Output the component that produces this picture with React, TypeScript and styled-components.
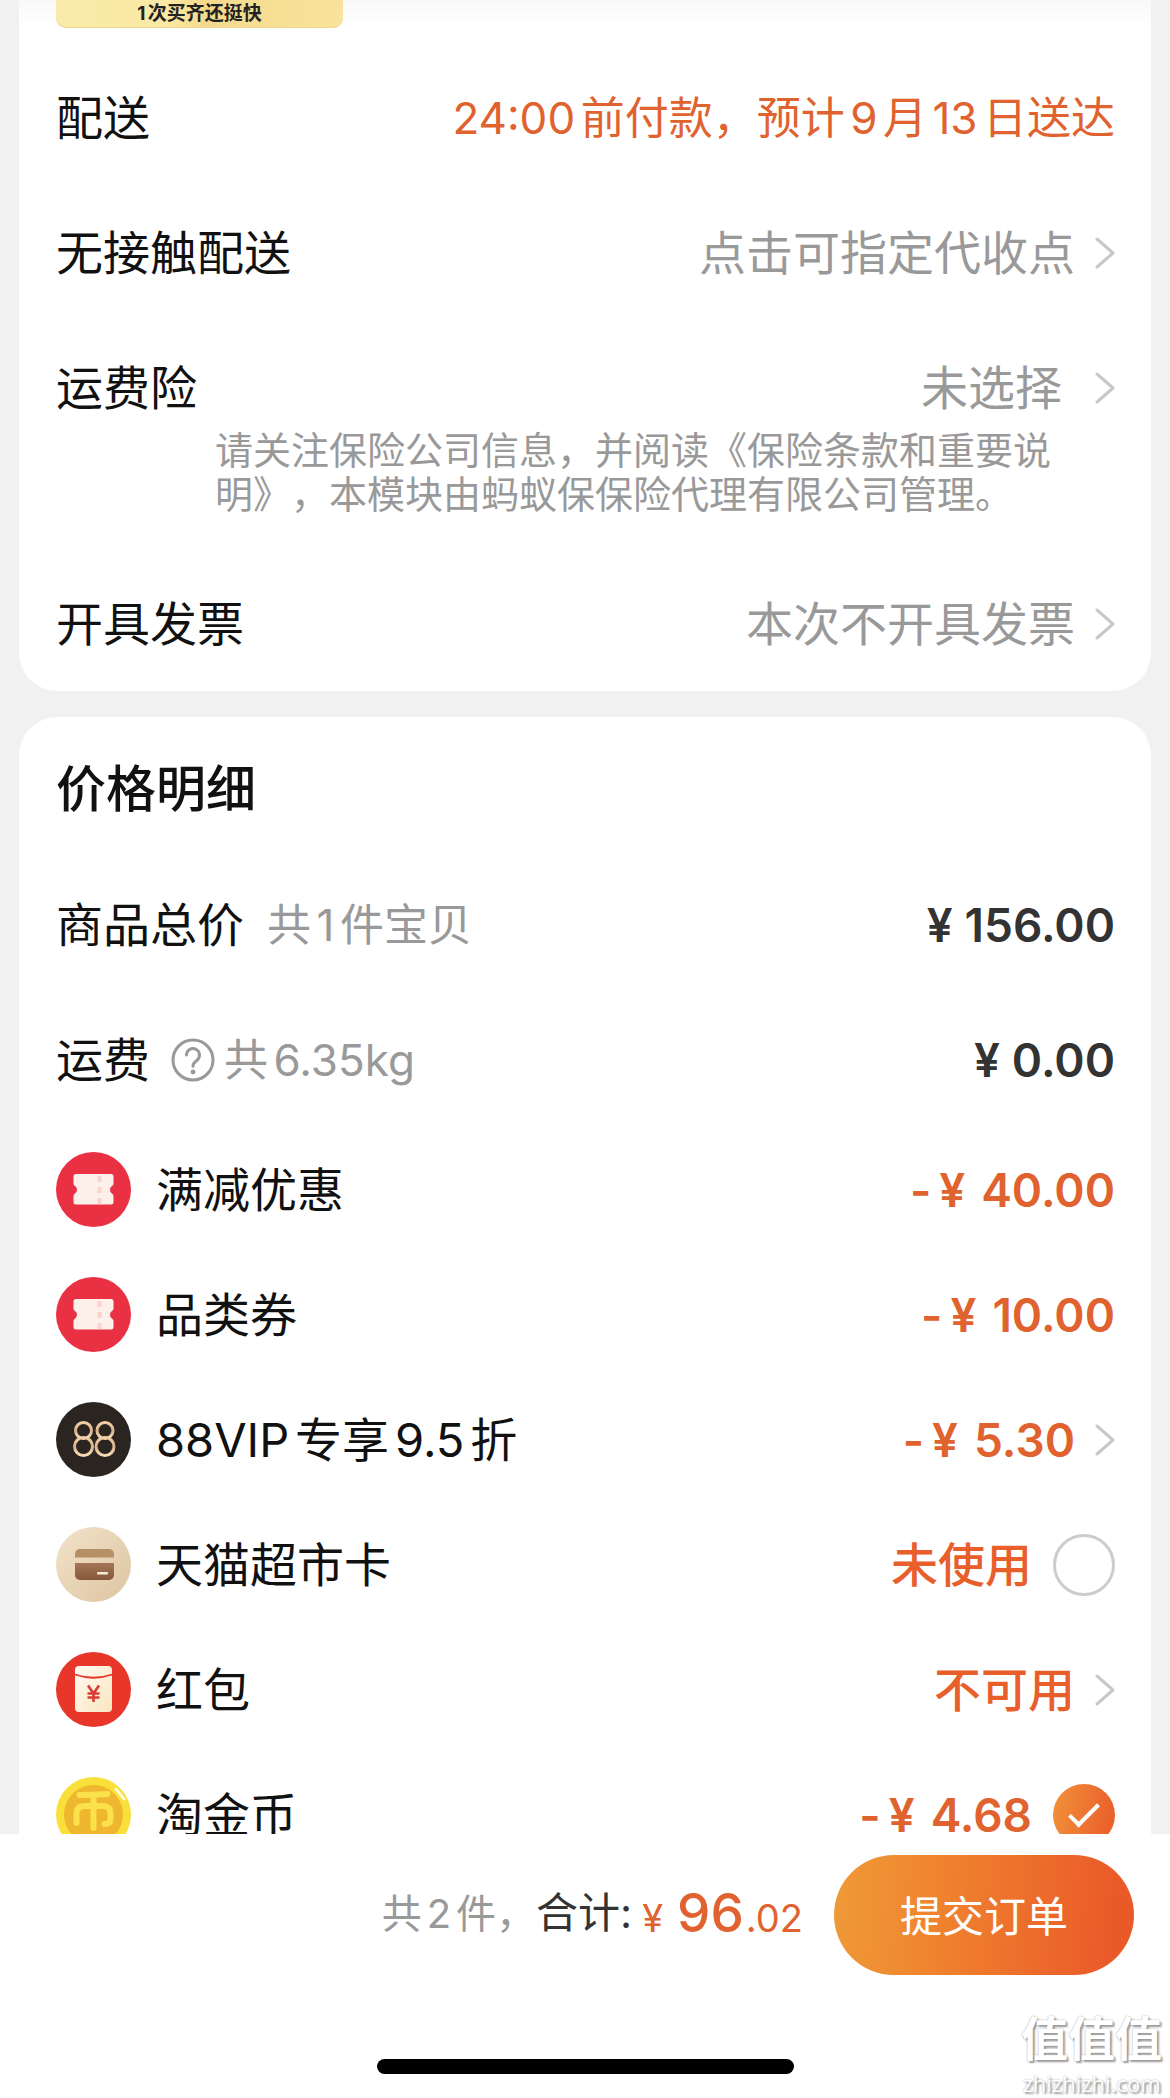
import React, { useState } from 'react';
import styled, { createGlobalStyle } from 'styled-components';

const GlobalStyle = createGlobalStyle`
  *, *::before, *::after { box-sizing: border-box; }
  body {
    margin: 0;
    background: #f1f1f1;
    color: #111;
    font-family: Inter, "Noto Sans CJK SC", sans-serif;
    text-autospace: normal;
    text-spacing-trim: space-all;
  }
  button, input { font: inherit; color: inherit; }
`;

const ORANGE = '#e0622f';
const GRAY = '#999';

const Page = styled.div`
  height: 100vh;
  display: flex;
  flex-direction: column;
  overflow: hidden;
`;

const Scroll = styled.main`
  flex: 1;
  min-height: 0;
  overflow: hidden;
  display: flex;
  flex-direction: column;
  gap: 26px;
  padding: 0 19px;
`;

const Card = styled.section<{ $first?: boolean }>`
  flex: none;
  padding: 0 36px 0 37px;
  background: ${p => (p.$first ? 'linear-gradient(#f8f8f8, #fff 24px)' : '#fff')};
  border-radius: ${p => (p.$first ? '0 0 38px 38px' : '38px')};
`;

const Banner = styled.div`
  width: 287px;
  height: 28px;
  padding-top: 2px;
  border-radius: 0 0 10px 10px;
  background: linear-gradient(90deg, #faebab, #fae9a4 38%, #f5da8c 52%, #f9e39c);
  box-shadow: inset 0 -1px 0 #efd98a;
  font-size: 19px;
  font-weight: 700;
  line-height: 24px;
  text-align: center;
  color: #222;
`;

const Rows = styled.div`
  padding-top: 22px;
`;

const Row = styled.div<{ $h: number }>`
  min-height: ${p => p.$h}px;
  display: flex;
  align-items: center;
  justify-content: space-between;
`;

const Label = styled.span`
  font-size: 47px;
  line-height: 60px;
`;

const Group = styled.span<{ $gap: number }>`
  display: flex;
  align-items: center;
  gap: ${p => p.$gap}px;
`;

const Muted = styled.span`
  font-size: 44px;
  line-height: 60px;
  color: ${GRAY};
`;

const DeliveryTime = styled(Muted)`
  color: ${ORANGE};
`;

const LinkButton = styled.button<{ $gap?: number }>`
  display: flex;
  align-items: center;
  gap: ${p => p.$gap ?? 20}px;
  padding: 0;
  border: 0;
  background: none;
  font-size: 47px;
  line-height: 60px;
  color: ${GRAY};
`;

const Note = styled.p`
  margin: -27px 0 40px 159px;
  max-width: 860px;
  font-size: 38px;
  line-height: 44px;
  color: ${GRAY};
`;

const Title = styled.h2`
  margin: 0;
  padding: 40px 0 36px;
  font-size: 50px;
  line-height: 64px;
  font-weight: 500;
`;

const Amount = styled.span<{ $dark?: boolean }>`
  display: flex;
  font-size: 46px;
  line-height: 60px;
  font-weight: 600;
  color: ${p => (p.$dark ? '#333' : ORANGE)};
`;

const Yen = styled.span<{ $wide?: boolean }>`
  margin: ${p => (p.$wide ? '0 16px 0 8px' : '0 12px 0 0')};
`;

const State = styled.span`
  font-size: 47px;
  line-height: 60px;
  font-weight: 500;
  color: #e85f2c;
`;

const IconButton = styled.button`
  display: flex;
  padding: 0;
  border: 0;
  background: none;
`;

const Check = styled.input`
  appearance: none;
  flex: none;
  width: 62px;
  height: 62px;
  margin: 0;
  border: 3px solid #ccc;
  border-radius: 50%;
  display: grid;
  place-items: center;
  &:checked {
    border: 0;
    background: linear-gradient(100deg, #f0923a, #ea5a29);
  }
  &:checked::before {
    content: '';
    width: 30px;
    height: 15px;
    margin: 0 0 6px 0;
    border: solid #fff;
    border-width: 0 0 4px 4px;
    transform: rotate(-45deg);
  }
`;

const Footer = styled.footer`
  flex: none;
  height: 264px;
  background: #fff;
  display: flex;
  flex-direction: column;
  position: relative;
`;

const Bar = styled.div`
  display: flex;
  align-items: center;
  justify-content: flex-end;
  gap: 31px;
  padding: 21px 36px 0 0;
`;

const Total = styled.div`
  display: flex;
  align-items: center;
  font-size: 38px;
  line-height: 60px;
`;

const Summary = styled.div`
  padding-bottom: 4px;
`;

const Count = styled.span`
  font-size: 40px;
  color: ${GRAY};
`;

const TotalLabel = styled.span`
  margin-right: 10px;
  font-size: 42px;
  color: #333;
`;

const Price = styled.div`
  color: ${ORANGE};
`;

const Big = styled.span`
  margin: 0 2px 0 14px;
  font-size: 53px;
  font-weight: 500;
`;

const Submit = styled.button`
  width: 300px;
  height: 120px;
  padding: 0 0 4px;
  border: 0;
  border-radius: 60px;
  background: linear-gradient(95deg, #ef9a38, #f0852f 32%, #ea5a29 92%);
  color: #fff;
  font-size: 42px;
`;

const HomeIndicator = styled.div`
  width: 417px;
  height: 15px;
  margin: 84px auto 0;
  border-radius: 8px;
  background: #000;
`;

const Watermark = styled.div`
  position: absolute;
  right: 8px;
  bottom: 0;
  display: flex;
  flex-direction: column;
  align-items: center;
  color: #fff;
  text-shadow: 2px 2px 2px #999, 0 0 2px #aaa;
`;

const WmBig = styled.span`
  font-family: "Liberation Sans", "Noto Sans CJK SC", sans-serif;
  font-size: 47px;
  line-height: 56px;
  font-weight: 700;
`;

const WmSmall = styled.span`
  font-family: "Open Sans", sans-serif;
  font-size: 22px;
  line-height: 30px;
`;

const Chevron = () => (
  <svg width="20" height="34" viewBox="0 0 20 34" fill="none" stroke="#c8c8c8" strokeWidth="3" strokeLinecap="round" strokeLinejoin="round" aria-hidden="true">
    <path d="M2 3l16 14L2 31" />
  </svg>
);

const HelpIcon = () => (
  <svg width="44" height="44" viewBox="0 0 44 44" fill="none" stroke="#999" strokeWidth="3" strokeLinecap="round" aria-hidden="true">
    <circle cx="22" cy="22" r="20" />
    <path d="M15.500 17a6.500 6.500 0 1 1 10.500 5.200c-2.600 1.900-4 3.200-4 6" />
    <circle cx="22" cy="34" r="2.400" fill="#999" stroke="none" />
  </svg>
);

const TicketIcon = () => (
  <svg width="75" height="75" viewBox="0 0 75 75" aria-hidden="true">
    <circle cx="37.500" cy="37.500" r="37.500" fill="#ea3043" />
    <path d="M20 22h35a2.500 2.500 0 0 1 2.500 2.500v7q0 1.500-1.500 2.500a4.500 4.500 0 0 0 0 7.500q1.500 1 1.500 2.500v6a2.500 2.500 0 0 1-2.500 2.500H20a2.500 2.500 0 0 1-2.500-2.500v-6q0-1.500 1.500-2.500a4.500 4.500 0 0 0 0-7.500q-1.500-1-1.500-2.500v-7A2.500 2.500 0 0 1 20 22z" fill="#fdf0ea" />
    <path d="M43.500 24v28" stroke="#f8d3cc" strokeWidth="4" strokeDasharray="6 5" />
  </svg>
);

const VipIcon = () => (
  <svg width="75" height="75" viewBox="0 0 75 75" aria-hidden="true">
    <defs>
      <linearGradient id="gold" x1="0" y1="0" x2="0" y2="1">
        <stop offset="0" stopColor="#f3cfa4" />
        <stop offset="0.5" stopColor="#d9b28a" />
        <stop offset="1" stopColor="#f8dcb8" />
      </linearGradient>
    </defs>
    <circle cx="37.500" cy="37.500" r="37.500" fill="#2b2522" />
    <g fill="none" stroke="url(#gold)" strokeWidth="3">
      <circle cx="27.500" cy="28.500" r="8" />
      <circle cx="27.500" cy="44.500" r="9" />
      <circle cx="49" cy="28.500" r="8" />
      <circle cx="49" cy="44.500" r="9" />
    </g>
  </svg>
);

const CardIcon = () => (
  <svg width="75" height="75" viewBox="0 0 75 75" aria-hidden="true">
    <defs>
      <linearGradient id="sand" x1="0" y1="0" x2="1" y2="1">
        <stop offset="0" stopColor="#f3e3cb" />
        <stop offset="1" stopColor="#dcc4a0" />
      </linearGradient>
      <linearGradient id="brown" x1="0" y1="0" x2="0" y2="1">
        <stop offset="0" stopColor="#a37755" />
        <stop offset="1" stopColor="#85583d" />
      </linearGradient>
    </defs>
    <circle cx="37.500" cy="37.500" r="37.500" fill="url(#sand)" />
    <path d="M24 22h29a5 5 0 0 1 5 5v3.500H19V27a5 5 0 0 1 5-5z" fill="#b59066" />
    <path d="M19 36h39v12a5 5 0 0 1-5 5H24a5 5 0 0 1-5-5z" fill="url(#brown)" />
    <rect x="41" y="45" width="11" height="2.600" rx="1" fill="#f6ead8" />
  </svg>
);

const PacketIcon = () => (
  <svg width="75" height="75" viewBox="0 0 75 75" aria-hidden="true">
    <defs>
      <linearGradient id="cream" x1="0" y1="0" x2="1" y2="1">
        <stop offset="0" stopColor="#fffaf0" />
        <stop offset="1" stopColor="#fae6c0" />
      </linearGradient>
    </defs>
    <circle cx="37.500" cy="37.500" r="37.500" fill="#e9362a" />
    <rect x="19" y="14" width="37" height="46" rx="4" fill="url(#cream)" />
    <path d="M19 22.500q18.500 6.500 37 0" fill="none" stroke="#e9362a" strokeWidth="1.800" />
    <path d="M32 33.500l5.500 8 5.500-8M37.500 41.500V50M31.500 41.500h12M31.500 45.500h12" fill="none" stroke="#dc3b35" strokeWidth="2.600" />
  </svg>
);

const CoinIcon = () => (
  <svg width="75" height="75" viewBox="0 0 75 75" aria-hidden="true">
    <circle cx="37.500" cy="37.500" r="37.500" fill="#f8df3a" />
    <circle cx="37.500" cy="37.500" r="29.500" fill="#efb62f" />
    <g fill="none" stroke="#fbe14a" strokeWidth="6" strokeLinecap="round" strokeLinejoin="round">
      <path d="M23.500 18q14 0 28-1" />
      <path d="M37.500 18v33" />
      <path d="M20.500 46V37q0-8 8-8h18q8 0 8 8v5q0 5-6 5" />
    </g>
    <path d="M60 12l8 10" stroke="#fffbd8" strokeWidth="3" strokeLinecap="round" />
  </svg>
);

const Discount = ({ value }: { value: string }) => (
  <Amount>
    -<Yen $wide>¥</Yen>{value}
  </Amount>
);

const Cost = ({ value }: { value: string }) => (
  <Amount $dark>
    <Yen>¥</Yen>{value}
  </Amount>
);

const DeliveryRows = () => (
  <Rows>
    <Row $h={135}>
      <Label>配送</Label>
      <DeliveryTime>24:00前付款，预计9月13日送达</DeliveryTime>
    </Row>
    <Row $h={135}>
      <Label>无接触配送</Label>
      <LinkButton type="button">点击可指定代收点<Chevron /></LinkButton>
    </Row>
    <Row $h={135}>
      <Label>运费险</Label>
      <LinkButton type="button" $gap={33}>未选择<Chevron /></LinkButton>
    </Row>
    <Note>请关注保险公司信息，并阅读《保险条款和重要说明》，本模块由蚂蚁保保险代理有限公司管理。</Note>
    <Row $h={135}>
      <Label>开具发票</Label>
      <LinkButton type="button">本次不开具发票<Chevron /></LinkButton>
    </Row>
  </Rows>
);

export default function App() {
  const [card, setCard] = useState(false);
  const [coin, setCoin] = useState(true);
  return (
    <Page>
      <GlobalStyle />
      <Scroll>
        <Card $first>
          <Banner>1次买齐还挺快</Banner>
          <DeliveryRows />
        </Card>
        <Card>
          <Title>价格明细</Title>
          <Row $h={135}>
            <Group $gap={23}>
              <Label>商品总价</Label>
              <Muted>共1件宝贝</Muted>
            </Group>
            <Cost value="156.00" />
          </Row>
          <Row $h={135}>
            <Group $gap={21}>
              <Label>运费</Label>
              <Group $gap={9}>
                <IconButton type="button" aria-label="运费说明"><HelpIcon /></IconButton>
                <Muted>共6.35kg</Muted>
              </Group>
            </Group>
            <Cost value="0.00" />
          </Row>
          <Row $h={125}>
            <Group $gap={25}><TicketIcon /><Label>满减优惠</Label></Group>
            <Discount value="40.00" />
          </Row>
          <Row $h={125}>
            <Group $gap={25}><TicketIcon /><Label>品类券</Label></Group>
            <Discount value="10.00" />
          </Row>
          <Row $h={125}>
            <Group $gap={25}><VipIcon /><Label>88VIP专享9.5折</Label></Group>
            <LinkButton type="button"><Discount value="5.30" /><Chevron /></LinkButton>
          </Row>
          <Row $h={125}>
            <Group $gap={25}><CardIcon /><Label as="label" htmlFor="card">天猫超市卡</Label></Group>
            <Group $gap={21}>
              <State>未使用</State>
              <Check id="card" type="checkbox" checked={card} onChange={e => setCard(e.target.checked)} />
            </Group>
          </Row>
          <Row $h={125}>
            <Group $gap={25}><PacketIcon /><Label>红包</Label></Group>
            <LinkButton type="button"><State>不可用</State><Chevron /></LinkButton>
          </Row>
          <Row $h={125}>
            <Group $gap={25}><CoinIcon /><Label as="label" htmlFor="coin">淘金币</Label></Group>
            <Group $gap={21}>
              <Discount value="4.68" />
              <Check id="coin" type="checkbox" checked={coin} onChange={e => setCoin(e.target.checked)} />
            </Group>
          </Row>
        </Card>
      </Scroll>
      <Footer>
        <Bar>
          <Total>
            <Summary>
              <Count>共2件，</Count>
              <TotalLabel>合计:</TotalLabel>
            </Summary>
            <Price>¥<Big>96</Big>.02</Price>
          </Total>
          <Submit type="button">提交订单</Submit>
        </Bar>
        <HomeIndicator />
        <Watermark>
          <WmBig>值值值</WmBig>
          <WmSmall>zhizhizhi.com</WmSmall>
        </Watermark>
      </Footer>
    </Page>
  );
}
